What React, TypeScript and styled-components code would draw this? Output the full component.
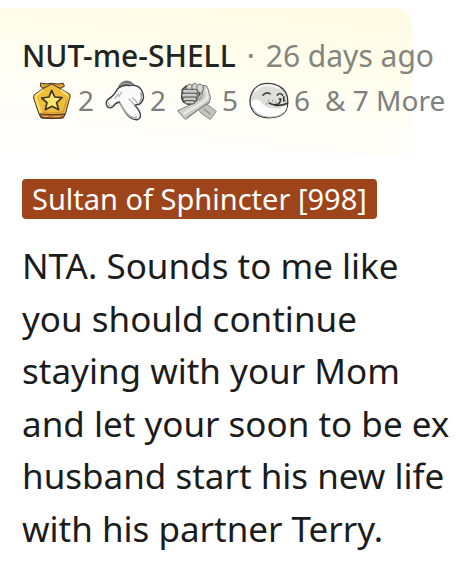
import React from "react";
import styled, { createGlobalStyle } from "styled-components";

const GlobalStyle = createGlobalStyle`
  body {
    margin: 0;
    background: #ffffff;
    font-family: "Noto Sans", "Open Sans", sans-serif;
  }
`;

const Comment = styled.article`
  padding-top: 8px;
`;

const Header = styled.header`
  box-sizing: border-box;
  margin-right: 64px;
  height: 148px;
  padding: 27px 0 0 22px;
  border-top-right-radius: 18px;
  background: linear-gradient(187deg, #fffbe3 0%, #fffdec 35%, #fffef8 68%, #ffffff 100%);
  white-space: nowrap;
`;

const Byline = styled.div`
  display: flex;
  align-items: baseline;
  gap: 11px;
  line-height: 42px;
`;

const Author = styled.a`
  color: #222420;
  font-size: 30px;
  font-weight: 500;
  text-decoration: none;
`;

const Meta = styled.span`
  color: #85857f;
  font-size: 30px;
`;

const Awards = styled.div`
  display: flex;
  align-items: center;
  height: 44px;
  margin-top: 1px;
  padding-left: 11px;
  color: #7e807e;
  font-size: 28px;
`;

const Award = styled.span`
  display: flex;
  flex: 0 0 72px;
  align-items: center;
  gap: 5px;
`;

const Icon = styled.svg`
  flex: none;
  width: 40px;
  height: 42px;
  overflow: visible;
`;

const More = styled.button`
  margin-left: 4px;
  padding: 0;
  border: 0;
  background: none;
  color: inherit;
  font-family: inherit;
  font-size: 28px;
`;

const Body = styled.div`
  padding: 23px 22px 0;
`;

const Flair = styled.span`
  display: inline-block;
  padding: 0 10px;
  border-radius: 4px;
  background: #9e441a;
  color: #ffffff;
  font-size: 29px;
  line-height: 40px;
  white-space: nowrap;
`;

const Message = styled.p`
  margin: 21px 0 0;
  color: #1b1c1b;
  font-size: 35px;
  line-height: 1.5;
`;

const StarMedal = () => (
  <Icon viewBox="22 16 120 126" aria-hidden="true">
    <g stroke="#3e3429" strokeWidth="3" strokeLinejoin="round">
      <path d="M45 28Q60 33 78 29Q97 33 113 29L116 38L107 43H51L44 38Z" fill="#dfa62f" />
      <path d="M78 31L104 45Q121 55 132 61Q136 68 131 77L119 121L112 133Q79 137 47 133L40 121L25 77Q22 68 26 63L52 45Z" fill="#eebd3c" />
      <path d="M42 121Q79 125 118 121L113 132Q80 136 46 132Z" fill="#bf782d" />
    </g>
    <path d="M52 49L32 65Q29 70 32 79L45 116M106 49L126 65" fill="none" stroke="#ffe477" strokeWidth="6" />
    <path d="M124 76L113 114Q82 121 52 115" fill="none" stroke="#d9982d" strokeWidth="4" />
    <path d="M78 50L87 70L109 72L93 87L99 108L79 98L59 108L64 87L48 73L70 70Z" fill="#ffe36b" stroke="#3d3529" strokeWidth="5" strokeLinejoin="round" />
    <path d="M78 62L84 76L98 78" fill="none" stroke="#fff0a0" strokeWidth="3" />
    <path d="M54 128H67M83 129H103" stroke="#edb050" strokeWidth="3" />
  </Icon>
);

const PointingGlove = () => (
  <Icon viewBox="22 18 120 126" aria-hidden="true">
    <path d="M62 44Q69 24 88 24Q105 25 112 42L101 49Q82 39 64 50Z" fill="#777877" stroke="#494949" strokeWidth="2" />
    <path d="M60 47Q76 34 94 38Q122 32 133 54Q143 75 132 87Q125 97 110 96Q130 114 128 131Q123 145 105 138Q88 130 77 108L65 87Q52 90 46 101Q35 109 28 99Q21 86 34 77Q49 69 60 47Z" fill="#fafafa" stroke="#3c3c3c" strokeWidth="4" strokeLinejoin="round" />
    <path d="M66 89Q75 108 88 122Q104 139 118 133" fill="none" stroke="#a9a9a9" strokeWidth="5" />
    <path d="M94 78Q103 86 112 97M105 74Q114 82 120 92M32 89Q35 101 44 98M62 63L52 76M72 57L64 70" fill="none" stroke="#b3b3b3" strokeWidth="4" strokeLinecap="round" />
    <path d="M129 58Q136 75 125 88" fill="none" stroke="#a0a0a0" strokeWidth="5" />
    <path d="M69 35Q85 26 104 37" fill="none" stroke="#a9a9a9" strokeWidth="3" />
  </Icon>
);

const ClaspedHands = () => (
  <Icon viewBox="22 16 123 126" aria-hidden="true">
    <g strokeLinejoin="round">
      <path d="M74 88L104 84L143 114L124 139L96 120Z" fill="#c3c3c0" stroke="#8a8a88" strokeWidth="3" />
      <path d="M38 47L50 36L62 34L78 38L92 44L90 84L64 96L42 86L36 74Z" fill="#8f908d" stroke="#3f413f" strokeWidth="4" />
      <path d="M102 34L112 35L118 46L125 72L121 88L92 106L48 139L24 112L62 94L84 82L90 66L100 56Z" fill="#cfcfcc" stroke="#777875" strokeWidth="3" />
      <g fill="#cbcbc8" stroke="#4d4e4c" strokeWidth="3">
        <rect x="39" y="46" width="46" height="13" rx="6" />
        <rect x="37" y="58" width="47" height="13" rx="6" />
        <rect x="40" y="70" width="42" height="12" rx="6" />
        <rect x="46" y="81" width="30" height="10" rx="5" />
      </g>
      <g fill="#d8d8d5" stroke="#666764" strokeWidth="3">
        <path d="M52 46Q50 31 61 30Q71 31 69 46Z" />
        <path d="M68 45Q66 29 77 28Q87 30 86 47Z" />
        <path d="M84 48Q80 31 92 30Q104 31 103 48L95 59Z" />
      </g>
      <path d="M110 44Q118 60 114 76L92 92L42 121" fill="none" stroke="#e9e9e6" strokeWidth="7" />
      <path d="M120 86L94 104L52 134M105 106L126 124M102 58Q98 72 90 80" fill="none" stroke="#91928f" strokeWidth="4" />
    </g>
  </Icon>
);

const SmilingSeal = () => (
  <Icon viewBox="32 18 123 126" aria-hidden="true">
    <path d="M35 82Q38 48 66 34Q98 23 127 40Q153 56 151 88Q152 118 127 130Q91 143 61 129Q34 114 35 82Z" fill="#dededd" stroke="#3e3e3d" strokeWidth="4" />
    <path d="M38 86Q52 74 65 83Q78 102 100 106Q125 110 149 97Q147 124 120 131Q88 139 61 127Q38 112 38 86Z" fill="#ffffff" />
    <path d="M50 55Q60 38 84 36Q109 34 126 46" fill="none" stroke="#f5f5f4" strokeWidth="7" />
    <path d="M75 66Q85 54 97 62M119 66Q127 56 135 66" fill="none" stroke="#454543" strokeWidth="5" strokeLinecap="round" />
    <path d="M94 90Q104 97 116 95Q126 94 129 82M110 97Q132 100 150 91M139 71V85M125 78H130" fill="none" stroke="#383836" strokeWidth="5" strokeLinecap="round" />
    <path d="M90 82H93M103 83H106M113 88H116M143 83H146M85 93H88" stroke="#777775" strokeWidth="4" />
    <path d="M42 103Q54 129 86 133Q119 137 139 120" fill="none" stroke="#a6a6a4" strokeWidth="3" />
  </Icon>
);

const awards = [
  { name: "Gold star", count: 2, Art: StarMedal },
  { name: "Pointing glove", count: 2, Art: PointingGlove },
  { name: "Clasped hands", count: 5, Art: ClaspedHands },
  { name: "Smiling seal", count: 6, Art: SmilingSeal },
];

export default function App() {
  return (
    <>
      <GlobalStyle />
      <Comment>
        <Header>
          <Byline>
            <Author href="#author">NUT-me-SHELL</Author>
            <Meta>·</Meta>
            <Meta>26 days ago</Meta>
          </Byline>
          <Awards>
            {awards.map(({ name, count, Art }) => (
              <Award key={name}>
                <Art />
                {count}
              </Award>
            ))}
            <More type="button">&amp; 7 More</More>
          </Awards>
        </Header>
        <Body>
          <Flair>Sultan of Sphincter [998]</Flair>
          <Message>
            NTA. Sounds to me like you should continue staying with your Mom and
            let your soon to be ex husband start his new life with his partner Terry.
          </Message>
        </Body>
      </Comment>
    </>
  );
}
